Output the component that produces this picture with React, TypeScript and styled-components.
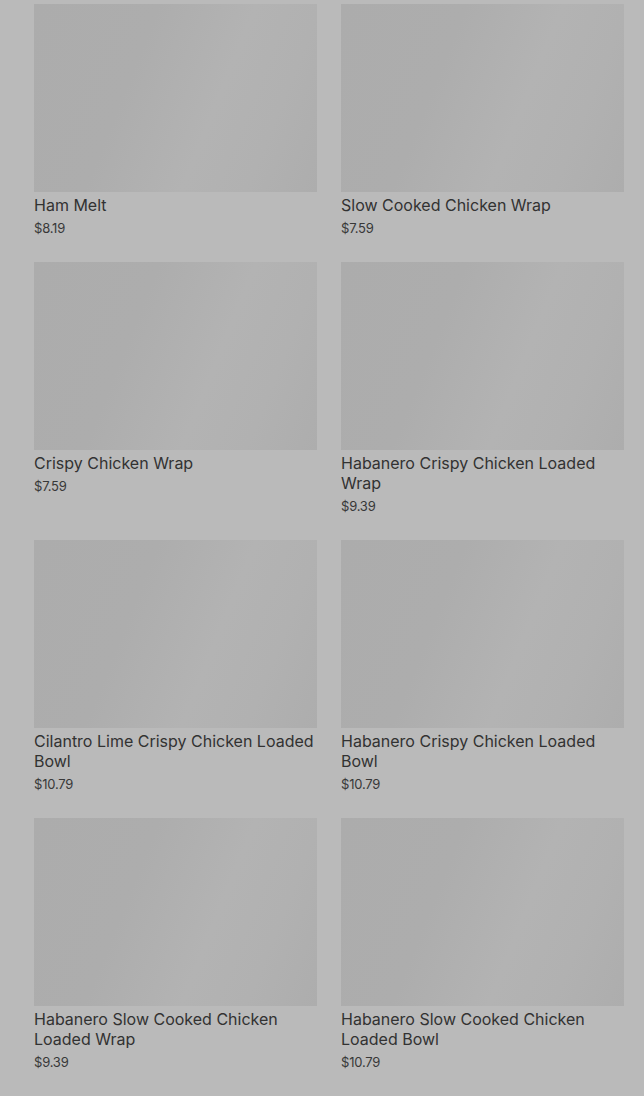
import React from "react";
import styled, { createGlobalStyle } from "styled-components";

const Global = createGlobalStyle`
  html, body { margin: 0; padding: 0; background: #bababa; }
  body { font-family: "Inter", "Liberation Sans", sans-serif; }
`;

const Page = styled.div`
  background: #bababa;
  min-height: 1096px;
  padding: 4px 20px 0 34px;
  box-sizing: border-box;
`;

const Grid = styled.div`
  display: grid;
  grid-template-columns: 283px 283px;
  column-gap: 24px;
  row-gap: 24px;
`;

const Card = styled.div`
  display: flex;
  flex-direction: column;
`;

const Thumb = styled.div`
  height: 188px;
  background: linear-gradient(
    112deg,
    #acacac 0%,
    #adadad 35%,
    #b3b3b3 62%,
    #b1b1b1 80%,
    #adadad 100%
  );
`;

const Title = styled.div`
  margin-top: 3px;
  font-size: 16px;
  line-height: 20px;
  color: #323232;
  font-weight: 400;
`;

const Price = styled.div`
  margin-top: 3px;
  font-size: 13px;
  line-height: 20px;
  color: #383838;
  letter-spacing: -0.2px;
`;

const items = [
  ["Ham Melt", "$8.19"],
  ["Slow Cooked Chicken Wrap", "$7.59"],
  ["Crispy Chicken Wrap", "$7.59"],
  ["Habanero Crispy Chicken Loaded Wrap", "$9.39"],
  ["Cilantro Lime Crispy Chicken Loaded Bowl", "$10.79"],
  ["Habanero Crispy Chicken Loaded Bowl", "$10.79"],
  ["Habanero Slow Cooked Chicken Loaded Wrap", "$9.39"],
  ["Habanero Slow Cooked Chicken Loaded Bowl", "$10.79"],
];

export default function App() {
  return (
    <>
      <Global />
      <Page>
        <Grid>
          {items.map(([name, price]) => (
            <Card key={name}>
              <Thumb />
              <Title>{name}</Title>
              <Price>{price}</Price>
            </Card>
          ))}
        </Grid>
      </Page>
    </>
  );
}
